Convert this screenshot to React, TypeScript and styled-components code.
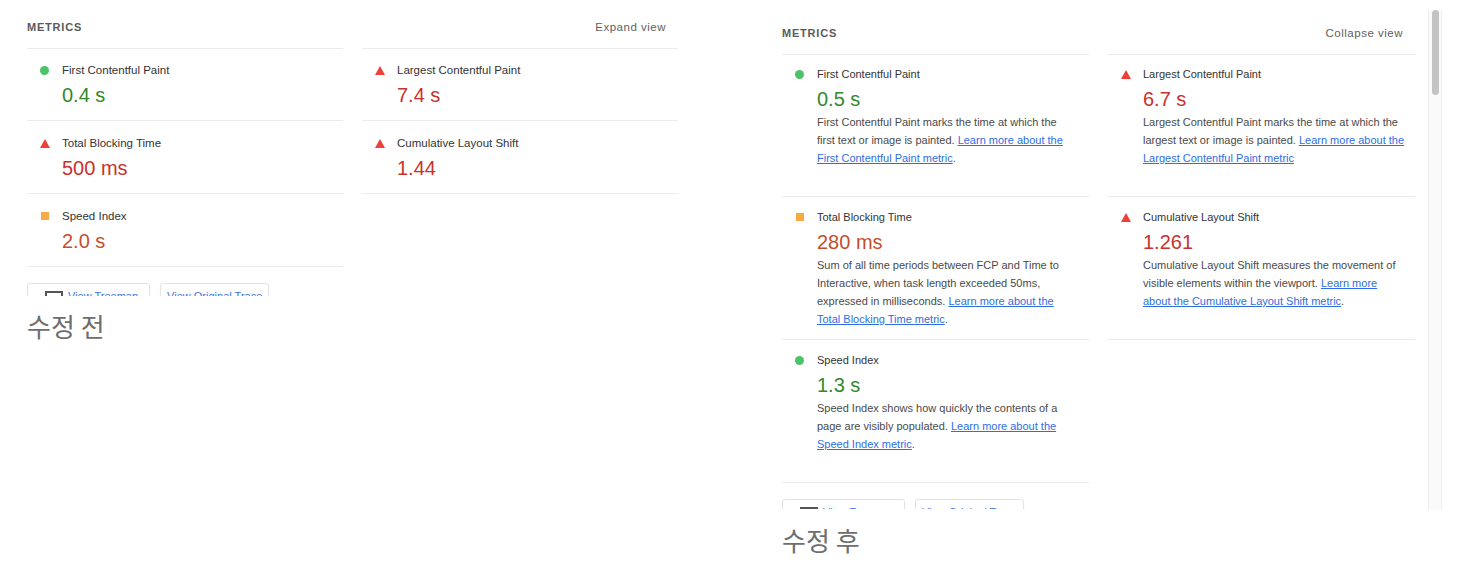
import React, { ReactNode } from "react";
import styled, { createGlobalStyle } from "styled-components";

type Kind = "pass" | "average" | "fail";

const GlobalStyle = createGlobalStyle`
  html, body {
    margin: 0;
    padding: 0;
    background: #fff;
  }
  body {
    font-family: "Liberation Sans", Arial, sans-serif;
  }
`;

const Page = styled.div`
  display: flex;
  align-items: flex-start;
  width: 1460px;
  height: 588px;
  overflow: hidden;
`;

const Figure = styled.figure<{ $offset: number }>`
  margin: 0 0 0 ${(p) => p.$offset}px;
  flex: none;
`;

const Shot = styled.div`
  display: flex;
  align-items: flex-start;
`;

const Panel = styled.div<{ $pl: number; $w: number; $h: number; $label: number }>`
  flex: none;
  box-sizing: content-box;
  width: ${(p) => p.$w}px;
  height: ${(p) => p.$h}px;
  padding-left: ${(p) => p.$pl}px;
  overflow: hidden;
  --label-size: ${(p) => p.$label}px;
`;

const Header = styled.div<{ $top: number }>`
  display: flex;
  justify-content: space-between;
  align-items: center;
  height: 16px;
  padding-top: ${(p) => p.$top}px;
  margin-bottom: 13px;
`;

const Title = styled.span`
  font-size: 11px;
  font-weight: 700;
  letter-spacing: 0.8px;
  color: #5a5a5a;
  text-transform: uppercase;
`;

const Toggle = styled.span`
  font-size: 11.5px;
  letter-spacing: 0.5px;
  color: #616161;
  padding-right: 12px;
`;

const Grid = styled.div`
  display: grid;
  grid-template-columns: 1fr 1fr;
  grid-auto-rows: 1fr;
  column-gap: 19px;
`;

const Metric = styled.div<{ $pt: number; $pb: number }>`
  display: grid;
  grid-template-columns: 35px 1fr;
  align-content: start;
  padding: ${(p) => p.$pt}px 0 ${(p) => p.$pb}px;
  border-bottom: 1px solid #ebebeb;

  &:nth-child(-n + 2) {
    box-shadow: inset 0 1px 0 #ebebeb;
  }
`;

const IconCell = styled.div`
  display: flex;
  align-items: center;
  justify-content: center;
  height: 16px;
`;

const ScoreIcon = styled.span<{ $kind: Kind }>`
  display: block;
  ${(p) =>
    p.$kind === "pass"
      ? `width: 9px; height: 9px; border-radius: 50%; background: #4cc36a;`
      : p.$kind === "average"
      ? `width: 8px; height: 8px; background: #f8ab45;`
      : `width: 0; height: 0; border-left: 5px solid transparent; border-right: 5px solid transparent; border-bottom: 9px solid #ee4036;`}
`;

const Body = styled.div``;

const Label = styled.div`
  font-size: var(--label-size);
  line-height: 16px;
  color: #333;
`;

const valueColor: Record<Kind, string> = {
  pass: "#33892b",
  average: "#c2502c",
  fail: "#c8322c",
};

const Value = styled.div<{ $kind: Kind }>`
  margin-top: 4px;
  font-size: 20px;
  line-height: 26px;
  color: ${(p) => valueColor[p.$kind]};
`;

const Desc = styled.div`
  margin-top: 1px;
  font-size: 11px;
  line-height: 18px;
  color: #4a4a4a;
  white-space: nowrap;

  a {
    color: #2f6de3;
    text-decoration: underline;
  }
`;

const Actions = styled.div`
  display: flex;
  gap: 10px;
  margin-top: 16px;
`;

const Button = styled.div<{ $pl: number; $pr: number }>`
  display: inline-flex;
  align-items: flex-start;
  gap: 5px;
  box-sizing: border-box;
  height: 30px;
  padding: 7px ${(p) => p.$pr}px 0 ${(p) => p.$pl}px;
  border: 1px solid #e3e3e3;
  border-radius: 3px;
  box-shadow: 0 1px 2px rgba(0, 0, 0, 0.05);
  background: #fff;
`;

const ButtonText = styled.span`
  margin-top: -2px;
  font-size: 11px;
  line-height: 14px;
  color: #3b74e2;
`;

const ScrollTrack = styled.div`
  flex: none;
  display: flex;
  justify-content: center;
  box-sizing: border-box;
  width: 14px;
  height: 500px;
  margin: 10px 0 0 13px;
  background: #fafafa;
  border-left: 1px solid #ececec;
  border-right: 1px solid #f1f1f1;
`;

const ScrollThumb = styled.div`
  width: 7px;
  height: 85px;
  border-radius: 4px;
  background: #c3c3c3;
`;

const Caption = styled.figcaption<{ $pl: number }>`
  margin: 15px 0 0 ${(p) => p.$pl}px;
  font-family: "Noto Sans CJK KR", "Noto Sans", sans-serif;
  font-size: 26px;
  line-height: 30px;
  color: #6e6e6e;
`;

const TreemapIcon = () => (
  <svg width="18" height="18" viewBox="0 0 18 18">
    <rect x="1" y="1" width="16" height="16" fill="none" stroke="#555" strokeWidth="2" />
    <path d="M1 9h16M9 9v8" stroke="#555" strokeWidth="1.5" />
  </svg>
);

interface MetricData {
  label: string;
  value: string;
  kind: Kind;
  desc?: ReactNode;
}

const before: MetricData[] = [
  { label: "First Contentful Paint", value: "0.4 s", kind: "pass" },
  { label: "Largest Contentful Paint", value: "7.4 s", kind: "fail" },
  { label: "Total Blocking Time", value: "500 ms", kind: "fail" },
  { label: "Cumulative Layout Shift", value: "1.44", kind: "fail" },
  { label: "Speed Index", value: "2.0 s", kind: "average" },
];

const after: MetricData[] = [
  {
    label: "First Contentful Paint",
    value: "0.5 s",
    kind: "pass",
    desc: (
      <>
        First Contentful Paint marks the time at which the
        <br />
        first text or image is painted.{" "}
        <a href="#fcp">
          Learn more about the
          <br />
          First Contentful Paint metric
        </a>
        .
      </>
    ),
  },
  {
    label: "Largest Contentful Paint",
    value: "6.7 s",
    kind: "fail",
    desc: (
      <>
        Largest Contentful Paint marks the time at which the
        <br />
        largest text or image is painted.{" "}
        <a href="#lcp">
          Learn more about the
          <br />
          Largest Contentful Paint metric
        </a>
      </>
    ),
  },
  {
    label: "Total Blocking Time",
    value: "280 ms",
    kind: "average",
    desc: (
      <>
        Sum of all time periods between FCP and Time to
        <br />
        Interactive, when task length exceeded 50ms,
        <br />
        expressed in milliseconds.{" "}
        <a href="#tbt">
          Learn more about the
          <br />
          Total Blocking Time metric
        </a>
        .
      </>
    ),
  },
  {
    label: "Cumulative Layout Shift",
    value: "1.261",
    kind: "fail",
    desc: (
      <>
        Cumulative Layout Shift measures the movement of
        <br />
        visible elements within the viewport.{" "}
        <a href="#cls">
          Learn more
          <br />
          about the Cumulative Layout Shift metric
        </a>
        .
      </>
    ),
  },
  {
    label: "Speed Index",
    value: "1.3 s",
    kind: "pass",
    desc: (
      <>
        Speed Index shows how quickly the contents of a
        <br />
        page are visibly populated.{" "}
        <a href="#si">
          Learn more about the
          <br />
          Speed Index metric
        </a>
        .
      </>
    ),
  },
];

interface SectionProps {
  metrics: MetricData[];
  toggle: string;
  top: number;
  pt: number;
  pb: number;
}

const MetricsSection = ({ metrics, toggle, top, pt, pb }: SectionProps) => (
  <>
    <Header $top={top}>
      <Title>Metrics</Title>
      <Toggle>{toggle}</Toggle>
    </Header>
    <Grid>
      {metrics.map((m) => (
        <Metric key={m.label} $pt={pt} $pb={pb}>
          <IconCell>
            <ScoreIcon $kind={m.kind} />
          </IconCell>
          <Body>
            <Label>{m.label}</Label>
            <Value $kind={m.kind}>{m.value}</Value>
            {m.desc && <Desc>{m.desc}</Desc>}
          </Body>
        </Metric>
      ))}
    </Grid>
    <Actions>
      <Button $pl={17} $pr={11}>
        <TreemapIcon />
        <ButtonText>View Treemap</ButtonText>
      </Button>
      <Button $pl={6} $pr={6}>
        <ButtonText>View Original Trace</ButtonText>
      </Button>
    </Actions>
  </>
);

export default function App() {
  return (
    <Page>
      <GlobalStyle />
      <Figure $offset={0}>
        <Shot>
          <Panel $pl={27} $w={651} $h={296} $label={11.5}>
            <MetricsSection metrics={before} toggle="Expand view" top={19} pt={14} pb={12} />
          </Panel>
        </Shot>
        <Caption $pl={27}>수정 전</Caption>
      </Figure>
      <Figure $offset={82}>
        <Shot>
          <Panel $pl={22} $w={633} $h={509} $label={11}>
            <MetricsSection metrics={after} toggle="Collapse view" top={25} pt={12} pb={11} />
          </Panel>
          <ScrollTrack>
            <ScrollThumb />
          </ScrollTrack>
        </Shot>
        <Caption $pl={22}>수정 후</Caption>
      </Figure>
    </Page>
  );
}
